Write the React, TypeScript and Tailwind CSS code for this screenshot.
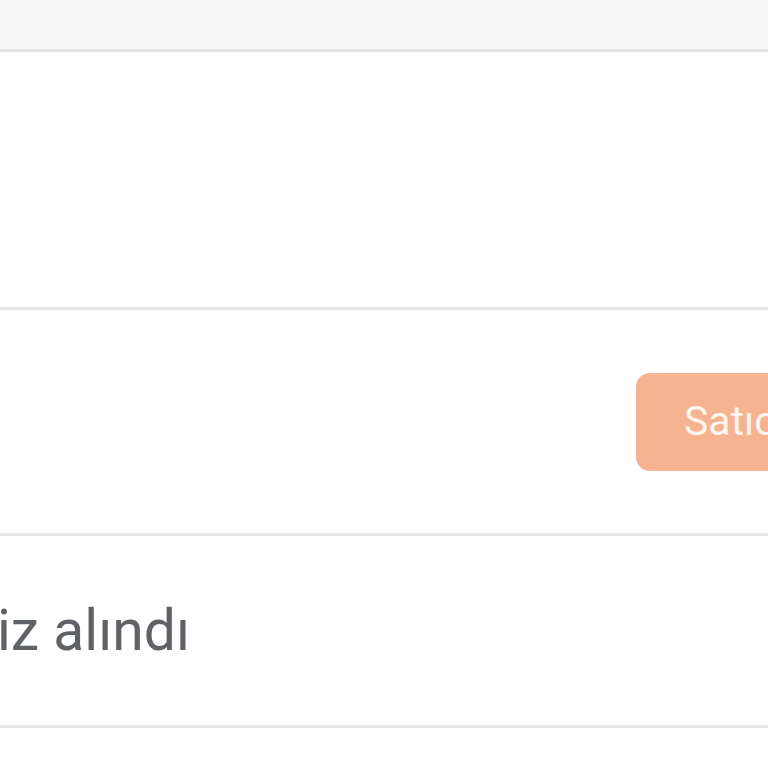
export default function App() {
  return (
    <div className="h-[768px] w-[768px] overflow-hidden bg-white font-['Roboto',_sans-serif]">
      <div className="h-[49px] bg-[#f8f8f8]" />
      <div className="h-[3px] bg-[#e3e3e3]" />
      <div className="h-[255px] bg-white" />
      <div className="h-[3px] bg-[#e6e6e6]" />
      <div className="flex h-[223px] items-center justify-start">
        <button className="ml-[636px] flex h-[98px] w-[300px] shrink-0 items-center rounded-[14px] bg-[#f6b392] pl-[48px] text-[41px] text-[#fff5ec]">
          Satıcıya yaz
        </button>
      </div>
      <div className="h-[3px] bg-[#e6e6e6]" />
      <div className="flex h-[189px] items-center">
        <p className="ml-[-3px] whitespace-nowrap text-[57px] leading-none text-[#5f6266]">iz alındı</p>
      </div>
      <div className="h-[3px] bg-[#e6e6e6]" />
      <div className="h-[40px] bg-white" />
    </div>
  );
}
